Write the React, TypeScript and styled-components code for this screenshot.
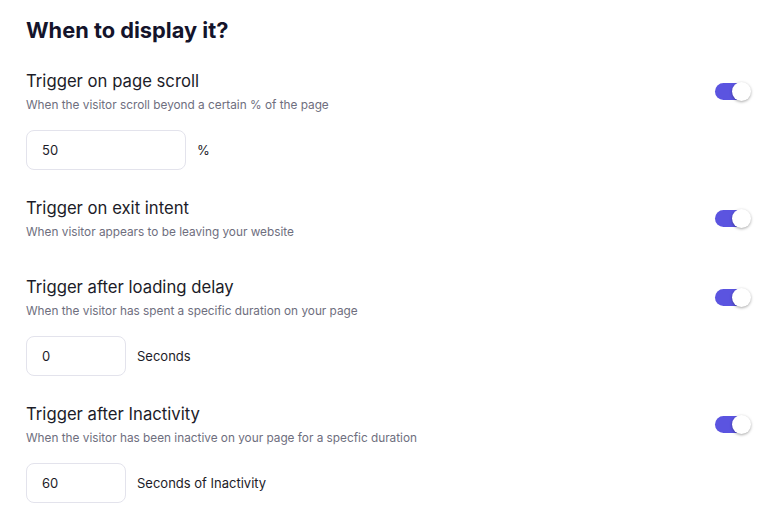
import styled, { createGlobalStyle } from 'styled-components';

const GlobalStyle = createGlobalStyle`
  html, body {
    margin: 0;
    padding: 0;
    background: #ffffff;
  }
  body {
    font-family: Inter, "Liberation Sans", sans-serif;
  }
`;

interface Trigger {
  title: string;
  description: string;
  value?: string;
  unit?: string;
  inputWidth?: number;
}

const triggers: Trigger[] = [
  {
    title: 'Trigger on page scroll',
    description: 'When the visitor scroll beyond a certain % of the page',
    value: '50',
    unit: '%',
    inputWidth: 160,
  },
  {
    title: 'Trigger on exit intent',
    description: 'When visitor appears to be leaving your website',
  },
  {
    title: 'Trigger after loading delay',
    description: 'When the visitor has spent a specific duration on your page',
    value: '0',
    unit: 'Seconds',
    inputWidth: 100,
  },
  {
    title: 'Trigger after Inactivity',
    description: 'When the visitor has been inactive on your page for a specfic duration',
    value: '60',
    unit: 'Seconds of Inactivity',
    inputWidth: 100,
  },
];

export default function App() {
  return (
    <>
      <GlobalStyle />
      <Page>
        <Title>When to display it?</Title>
        <List>
          {triggers.map((t) => (
            <Section key={t.title} hasInput={!!t.value}>
              <Header>
                <TextBlock>
                  <Heading>{t.title}</Heading>
                  <Description>{t.description}</Description>
                </TextBlock>
                <Toggle>
                  <Knob />
                </Toggle>
              </Header>
              {t.value !== undefined && (
                <InputRow>
                  <Field width={t.inputWidth ?? 100}>{t.value}</Field>
                  <Unit>{t.unit}</Unit>
                </InputRow>
              )}
            </Section>
          ))}
        </List>
      </Page>
    </>
  );
}

const Page = styled.div`
  padding: 15px 33px 0 26px;
  width: 784px;
  box-sizing: border-box;
`;

const Title = styled.h1`
  margin: 0;
  font-size: 21.8px;
  line-height: 30px;
  font-weight: 700;
  color: #14142b;
`;

const List = styled.div`
  display: flex;
  flex-direction: column;
  margin-top: 24px;
  gap: 26px;
`;

const Section = styled.div<{ hasInput: boolean }>`
  display: flex;
  flex-direction: column;
  gap: 17px;
  padding-bottom: ${({ hasInput }) => (hasInput ? '0' : '9px')};
`;

const Header = styled.div`
  display: flex;
  align-items: center;
  justify-content: space-between;
`;

const TextBlock = styled.div`
  display: flex;
  flex-direction: column;
  gap: 4px;
`;

const Heading = styled.div`
  font-size: 16.7px;
  line-height: 24px;
  color: #1c1c28;
`;

const Description = styled.div`
  font-size: 11.8px;
  line-height: 16px;
  color: #6e6e7e;
`;

const Toggle = styled.div`
  position: relative;
  width: 34px;
  height: 17px;
  border-radius: 9px;
  background: #5b54e0;
  margin-right: 2px;
`;

const Knob = styled.div`
  position: absolute;
  right: -2px;
  top: -1px;
  width: 19px;
  height: 19px;
  border-radius: 50%;
  background: #ffffff;
  box-shadow: 0 1px 3px rgba(0, 0, 0, 0.35);
`;

const InputRow = styled.div`
  display: flex;
  align-items: center;
  gap: 11px;
`;

const Field = styled.div<{ width: number }>`
  box-sizing: border-box;
  width: ${({ width }) => width}px;
  height: 40px;
  border: 1px solid #e3e3ec;
  border-radius: 8px;
  padding: 0 15px;
  display: flex;
  align-items: center;
  font-size: 13px;
  color: #1c1c28;
`;

const Unit = styled.span`
  font-size: 13px;
  color: #1c1c28;
`;
